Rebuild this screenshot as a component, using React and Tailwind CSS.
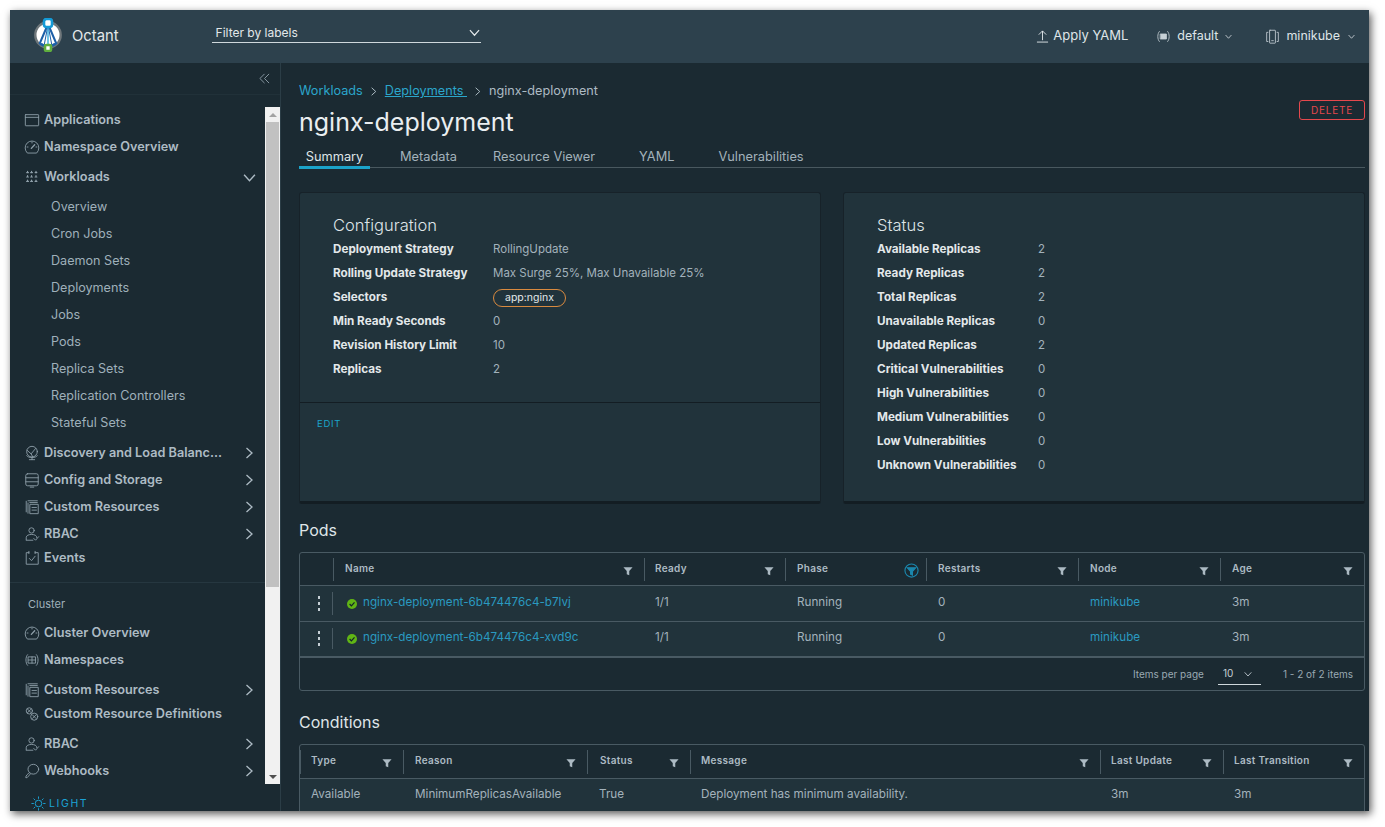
import React from "react";

const S = ({ children, className = "w-4 h-4", vb = "0 0 36 36", sw = 2 }) => (
  <svg viewBox={vb} className={className} fill="none" stroke="currentColor" strokeWidth={sw} strokeLinecap="round" strokeLinejoin="round">{children}</svg>
);
const Chevron = ({ dir = "right", className = "w-3 h-3" }) => (
  <svg viewBox="0 0 12 12" className={className} fill="none" stroke="currentColor" strokeWidth="1.3">
    {dir === "right" ? <path d="M3.5 1 L9 6 L3.5 11" /> : <path d="M1 3.5 L6 9 L11 3.5" />}
  </svg>
);
const Logo = () => (
  <svg viewBox="0 0 30 34" className="w-[30px] h-[34px]">
    <circle cx="15" cy="17" r="12.7" fill="#fff" stroke="#6f777b" strokeWidth="2.4" />
    <path d="M5.5 25.5 A13 13 0 0 0 24.5 25.5 L21 25 A9 9 0 0 1 9 25Z" fill="#1d5fa8" />
    <path d="M15 6 L6.5 26 M15 6 L23.5 26" stroke="#1d5fa8" strokeWidth="2" fill="none" />
    <path d="M15 7 L11 28 M15 7 L19 28" stroke="#1d5fa8" strokeWidth="1" fill="none" />
    <path d="M15 6 V29" stroke="#2aa7dc" strokeWidth="1.3" fill="none" />
    <rect x="11" y="1" width="8" height="8" rx="2.5" fill="#fff" stroke="#149ad6" strokeWidth="2.6" />
    <rect x="12" y="27" width="6" height="6" rx="1.5" fill="#fff" stroke="#5fae3e" strokeWidth="2.6" />
  </svg>
);
const icons = {
  app: <S><rect x="3" y="6" width="30" height="25" rx="1" /><path d="M3 12 H33" /></S>,
  gauge: <S><path d="M7 31 A15.5 15.5 0 1 1 29 31 Z" /><path d="M16.5 21 L24 13" strokeWidth="3" /><path d="M18 7 V9 M7 18 H9 M29 18 H27" /></S>,
  grid: <S sw={2.6}><path d="M6 8h4M15 8h4M25 8h4M6 18h4M15 18h4M25 18h4M6 28h4M15 28h4M25 28h4M8 5v1M17 5v1M27 5v1M8 15v1M17 15v1M27 15v1M8 25v1M17 25v1M27 25v1" /></S>,
  globe: <S><circle cx="18" cy="15" r="12" /><path d="M7 12 L16 20 L26 8 M16 20 L20 27 M6 24 C9 30 27 30 30 24 M12 33 H24 M18 29 V33" /></S>,
  db: <S><rect x="4" y="4" width="28" height="27" rx="4" /><path d="M4 13 H32 M4 22 H32 M14 34 H22" /></S>,
  crs: <S><path d="M5 5 V29 M9 4 H30" /><path d="M9 9 V32 M13 8 H30" /><rect x="14" y="12" width="18" height="21" /><path d="M18 19 H28 M18 25 H28" /></S>,
  rbac: <S><circle cx="17" cy="10" r="6" /><path d="M5 31 V26 C5 21 11 19 17 19 C23 19 29 21 29 26 M5 32 H20 M22 28 L26 32 L33 24" /></S>,
  events: <S><path d="M11 6 H5 V32 H32 V6 H25 M11 3 V8 M25 3 V8" /><path d="M12 19 L17 24 L25 14" /></S>,
  ns: <S><path d="M8 6 C3 11 3 25 8 30 M28 6 C33 11 33 25 28 30" /><rect x="10" y="11" width="16" height="14" /><path d="M18 11 V25 M10 18 H26" /></S>,
  crd: <S><circle cx="12" cy="11" r="7" /><circle cx="23" cy="24" r="8" /><path d="M8 7 L16 15 M16 7 L8 15 M19 20 L27 28 M27 20 L19 28" /></S>,
  hook: <S><ellipse cx="21" cy="14" rx="12" ry="11" /><path d="M12 22 C8 25 4 28 4 33 L7 33 L14 25" /></S>,
};

const rows = [
  { t: "Applications", i: "app", c: "mt-px" },
  { t: "Namespace Overview", i: "gauge", c: "mt-[3px]" },
  { t: "Workloads", i: "grid", c: "mt-[6px]", ch: "down" },
  { t: "Overview", sub: 1, c: "mt-[6px]" },
  { t: "Cron Jobs", sub: 1, c: "mt-[3px]" },
  { t: "Daemon Sets", sub: 1, c: "mt-[3px]" },
  { t: "Deployments", sub: 1, c: "mt-[3px]" },
  { t: "Jobs", sub: 1, c: "mt-[3px]" },
  { t: "Pods", sub: 1, c: "mt-[3px]" },
  { t: "Replica Sets", sub: 1, c: "mt-[3px]" },
  { t: "Replication Controllers", sub: 1, c: "mt-[3px]" },
  { t: "Stateful Sets", sub: 1, c: "mt-[3px]" },
  { t: "Discovery and Load Balanc...", i: "globe", c: "mt-[6px]", ch: "right" },
  { t: "Config and Storage", i: "db", c: "mt-[3px]", ch: "right" },
  { t: "Custom Resources", i: "crs", c: "mt-[3px]", ch: "right" },
  { t: "RBAC", i: "rbac", c: "mt-[3px]", ch: "right" },
  { t: "Events", i: "events", c: "" },
];
const rows2 = [
  { t: "Cluster Overview", i: "gauge", c: "mt-[5px]" },
  { t: "Namespaces", i: "ns", c: "mt-[3px]" },
  { t: "Custom Resources", i: "crs", c: "mt-[6px]", ch: "right" },
  { t: "Custom Resource Definitions", i: "crd", c: "" },
  { t: "RBAC", i: "rbac", c: "mt-[6px]", ch: "right" },
  { t: "Webhooks", i: "hook", c: "mt-[3px]", ch: "right" },
];

const NavRow = ({ r }) => (
  <div className={`h-6 flex items-center relative ${r.c}`}>
    {r.sub ? (
      <span className="pl-[41px] text-[12.6px] text-[#9fb0ba]">{r.t}</span>
    ) : (
      <>
        <span className="ml-[14px] w-[16px] h-4 text-[#8fa0aa] flex items-center">{icons[r.i]}</span>
        <span className="ml-[4px] text-[12.7px] font-semibold text-[#adbbc4] whitespace-nowrap">{r.t}</span>
      </>
    )}
    {r.ch && (
      <span className="absolute left-[233px] text-[#adbbc4]"><Chevron dir={r.ch} className={r.ch === "down" ? "w-[13px] h-[13px]" : "w-3 h-3"} /></span>
    )}
  </div>
);

const Filter = ({ active }) => active ? (
  <svg viewBox="0 0 16 16" className="w-[15px] h-[15px]" fill="none" stroke="#1b87ad" strokeWidth="1.2">
    <circle cx="8" cy="8" r="7" /><path d="M3.5 5 H12.5 L9 9 V13 L7 12 V9 Z" fill="#1b87ad" />
  </svg>
) : (
  <svg viewBox="0 0 12 12" className="w-[10px] h-[10px]"><path d="M0.5 1.5 H11.5 L7.5 6 V11 L4.5 10 V6 Z" fill="#acbac3" /></svg>
);

const TH = ({ w, label, active, pad = "pl-[12px]", first }) => (
  <div className={`${w} h-full flex items-center relative shrink-0`}>
    {!first && <div className={`absolute left-0 top-[5px] bottom-[4px] w-px bg-[#495a63]`} />}
    {label && <span className={`${pad} text-[10px] font-semibold tracking-[0.3px] text-[#adbbc4] -mt-[2px]`}>{label}</span>}
    {!first && (active
      ? <span className="absolute right-[7px] top-[10px]"><Filter active /></span>
      : <span className="absolute right-[11px] top-[13px]"><Filter /></span>)}
  </div>
);

const Card = ({ title, rows, w, edit, valueX }) => (
  <div className={`${w} h-[312px] bg-[#21333b] rounded-[3px] border border-[#172229] border-b-[3px] border-b-[#131d23] flex flex-col`}>
    <div className={`pl-[33px] pt-[21px] ${edit ? "h-[210px] border-b border-[#131d23]" : ""}`}>
      <div className="text-[16.5px] leading-[22px] text-[#dfe5e8] font-light mb-[2px]">{title}</div>
      {rows.map(([k, v, pill]) => (
        <div key={k} className="flex items-center h-6">
          <span className={`${valueX} text-[11.7px] font-bold text-[#e3e8ea] shrink-0`}>{k}</span>
          {pill ? (
            <span className="h-[18px] px-[11px] rounded-full border border-[#d98a3f] flex items-center text-[10.5px] text-[#e3e8ea]">{v}</span>
          ) : (
            <span className="text-[11.5px] text-[#a3b2bb]">{v}</span>
          )}
        </div>
      ))}
    </div>
    {edit && <div className="pl-[17px] pt-[14px] text-[9.5px] tracking-[0.7px] text-[#1ba3c9]">EDIT</div>}
  </div>
);

const podCols = ["w-[33px]", "w-[311px]", "w-[141px]", "w-[141px]", "w-[152px]", "w-[142px]", "flex-1"];
const Pod = ({ name, h }) => (
  <div className={`${h} flex bg-[#21333b] items-center text-[11.7px] text-[#a3b2bb] border-t border-[#495a63]`}>
    <div className="w-[33px] shrink-0 h-full flex items-center relative">
      <span className="absolute right-0 top-[6px] bottom-[5px] w-px bg-[#495a63]" />
      <span className="ml-[18px] flex flex-col gap-[3px]"><i className="w-[2px] h-[3px] bg-[#c5cfd5]" /><i className="w-[2px] h-[3px] bg-[#c5cfd5]" /><i className="w-[2px] h-[3px] bg-[#c5cfd5]" /></span>
    </div>
    <div className="w-[311px] shrink-0 flex items-center pl-[14px] gap-[6px]">
      <svg viewBox="0 0 10 10" className="w-[10px] h-[10px] mt-[2px]"><circle cx="5" cy="5" r="5" fill="#60b515" /><path d="M2.6 5 L4.4 6.8 L7.5 3.4" stroke="#13222a" strokeWidth="1.2" fill="none" /></svg>
      <span className="text-[#2a9ac0]">{name}</span>
    </div>
    <div className={`${podCols[2]} shrink-0 pl-[11px]`}>1/1</div>
    <div className={`${podCols[3]} shrink-0 pl-[12px]`}>Running</div>
    <div className={`${podCols[4]} shrink-0 pl-[12px]`}>0</div>
    <div className={`${podCols[5]} shrink-0 pl-[12px] text-[#2a9ac0]`}>minikube</div>
    <div className="flex-1 pl-[12px]">3m</div>
  </div>
);

export default function App() {
  return (
    <div className="w-[1385px] h-[827px] bg-white p-[10px] overflow-hidden" style={{ fontFamily: 'Inter, "Noto Sans", sans-serif' }}>
      <div className="w-[1359px] h-[801px] flex flex-col bg-[#1b2a32] shadow-[2px_3px_8px_rgba(0,0,0,0.65)] overflow-hidden">
        <header className="h-[53px] shrink-0 bg-[#2d414d] flex items-center text-[#e3e8ea] relative">
          <div className="ml-[23px] -mt-[3px]"><Logo /></div>
          <span className="ml-[9px] text-[14.8px]">Octant</span>
          <div className="ml-[93px] -mt-[7px] w-[269px] h-[20px] border-b border-[#cfd8dc] flex items-center justify-between pl-[4px] pr-[1px] text-[12px]">
            <span className="mt-px">Filter by labels</span><Chevron dir="down" className="w-[11px] h-[11px]" />
          </div>
          <div className="ml-auto flex items-center text-[#dfe5e8] text-[12.5px] -mt-px">
            <svg viewBox="0 0 14 14" className="w-[13px] h-[13px]" fill="none" stroke="currentColor" strokeWidth="1"><path d="M7 11 V1 M3 5 L7 1 L11 5 M1 13 H13" /></svg>
            <span className="ml-[4px] text-[13px]">Apply YAML</span>
            <span className="ml-[28px] text-[#c6d0d6]"><S className="w-[15px] h-[15px]"><path d="M8 6 C3 11 3 25 8 30 M28 6 C33 11 33 25 28 30" /><rect x="11" y="12" width="14" height="12" fill="currentColor" /></S></span>
            <span className="ml-[6px]">default</span>
            <Chevron dir="down" className="w-[7px] h-[7px] ml-[7px]" />
            <span className="ml-[33px] text-[#c6d0d6]"><S className="w-[15px] h-[15px]"><path d="M7 8 H4 V30 H7 M29 8 H32 V30 H29" /><rect x="11" y="3" width="14" height="31" rx="1" /><path d="M16 28 H20" /></S></span>
            <span className="ml-[6px]">minikube</span>
            <Chevron dir="down" className="w-[7px] h-[7px] ml-[8px] mr-[14px]" />
          </div>
        </header>
        <div className="flex-1 flex min-h-0">
          <aside className="w-[271px] shrink-0 border-r border-[#2b3d46] flex flex-col">
            <div className="h-[32px] shrink-0 border-b border-[#213139] flex items-center justify-end pr-[10px] text-[#8fa0aa]">
              <svg viewBox="0 0 12 12" className="w-[11px] h-[11px]" fill="none" stroke="currentColor" strokeWidth="1"><path d="M6 1 L1 6 L6 11 M11 1 L6 6 L11 11" /></svg>
            </div>
            <div className="h-[677px] mt-[12px] shrink-0 flex">
              <div className="w-[255px] shrink-0">
                {rows.map((r) => <NavRow key={r.t} r={r} />)}
                <div className="mt-[12px] border-t border-[#263740] h-[10px]" />
                <div className="h-6 pl-[18px] flex items-center text-[11px] text-[#9fb0ba]">Cluster</div>
                {rows2.map((r) => <NavRow key={r.t + r.i + r.c} r={r} />)}
              </div>
              <div className="w-[15px] shrink-0 bg-[#f1f1f1] flex flex-col items-center">
                <div className="h-[15px] flex items-center"><span className="w-0 h-0 border-x-[4px] border-x-transparent border-b-[4px] border-b-[#a3a3a3]" /></div>
                <div className="w-[13px] h-[465px] bg-[#c1c1c1]" />
                <div className="flex-1" />
                <div className="h-[15px] flex items-center"><span className="w-0 h-0 border-x-[4px] border-x-transparent border-t-[4px] border-t-[#505050]" /></div>
              </div>
            </div>
            <div className="pl-[21px] pt-[12px] flex items-center text-[#1ba3d6] text-[10.5px] tracking-[1.6px]">
              <svg viewBox="0 0 16 16" className="w-[15px] h-[15px]" fill="none" stroke="currentColor" strokeWidth="1"><circle cx="8" cy="8" r="3.5" /><path d="M8 0.5v2.5M8 13v2.5M0.5 8h2.5M13 8h2.5M2.7 2.7l1.8 1.8M11.5 11.5l1.8 1.8M2.7 13.3l1.8-1.8M11.5 4.5l1.8-1.8" /></svg>
              <span className="ml-[3px]">LIGHT</span>
            </div>
          </aside>
          <main className="flex-1 min-w-0 pl-[18px] pr-[4px] overflow-hidden">
            <div className="h-[20px] mt-[18px] flex items-center text-[12.7px]">
              <span className="text-[#2ba6cb]">Workloads</span>
              <span className="mx-[6.5px] text-[#adbbc4]"><Chevron className="w-[9px] h-[9px]" /></span>
              <span className="text-[#2ba6cb] underline whitespace-pre">Deployments </span>
              <span className="mx-[6.5px] text-[#adbbc4]"><Chevron className="w-[9px] h-[9px]" /></span>
              <span className="text-[#adbbc4]">nginx-deployment</span>
            </div>
            <div className="flex justify-between items-start h-[38px]">
              <h1 className="text-[25px] leading-[36px] mt-[3px] text-[#eaeef0] font-normal">nginx-deployment</h1>
              <button className="w-[66px] h-[20px] mt-[-1px] rounded-[3px] border border-[#e5484d] text-[#e5484d] text-[10px] tracking-[0.8px]">DELETE</button>
            </div>
            <div className="h-[18px] mt-[10px] box-content flex text-[12.8px] text-[#a3b2bb] border-b border-[#49585f] relative">
              <span className="w-[71px] text-center text-[#dfe5e8] border-b-[3px] border-[#1ba3c9] h-[20px] leading-[16px]">Summary</span>
              <span className="ml-[30px] leading-[16px]">Metadata</span>
              <span className="ml-[36px] leading-[16px]">Resource Viewer</span>
              <span className="ml-[44px] leading-[16px]">YAML</span>
              <span className="ml-[44px] leading-[16px]">Vulnerabilities</span>
            </div>
            <div className="flex gap-[22px] mt-[24px]">
              <Card w="w-[522px]" valueX="w-[160px]" edit title="Configuration" rows={[
                ["Deployment Strategy", "RollingUpdate"],
                ["Rolling Update Strategy", "Max Surge 25%, Max Unavailable 25%"],
                ["Selectors", "app:nginx", true],
                ["Min Ready Seconds", "0"],
                ["Revision History Limit", "10"],
                ["Replicas", "2"],
              ]} />
              <Card w="w-[522px]" valueX="w-[161px]" title="Status" rows={[
                ["Available Replicas", "2"], ["Ready Replicas", "2"], ["Total Replicas", "2"], ["Unavailable Replicas", "0"], ["Updated Replicas", "2"],
                ["Critical Vulnerabilities", "0"], ["High Vulnerabilities", "0"], ["Medium Vulnerabilities", "0"], ["Low Vulnerabilities", "0"], ["Unknown Vulnerabilities", "0"],
              ]} />
            </div>
            <h2 className="text-[16px] leading-[22px] mt-[15px] text-[#dfe5e8]">Pods</h2>
            <div className="mt-[11px] h-[139px] border border-[#495a63] rounded-[3px] flex flex-col">
              <div className="h-[32px] flex shrink-0">
                <TH w={podCols[0]} first />
                <TH w={podCols[1]} label="Name" />
                <TH w={podCols[2]} label="Ready" pad="pl-[11px]" />
                <TH w={podCols[3]} label="Phase" active />
                <TH w={podCols[4]} label="Restarts" />
                <TH w={podCols[5]} label="Node" />
                <TH w={podCols[6]} label="Age" />
              </div>
              <Pod name="nginx-deployment-6b474476c4-b7lvj" h="h-[36px] pb-[1px]" />
              <Pod name="nginx-deployment-6b474476c4-xvd9c" h="h-[35px] pb-[2px]" />
              <div className="flex-1 border-t-2 border-[#495a63] flex items-center justify-end pr-[11px] text-[10px] text-[#9aa9b2]">
                <span>Items per page</span>
                <span className="ml-[14px] w-[43px] h-[22px] border-b border-[#cfd8dc] flex items-center justify-between pl-[5px] pr-[9px] text-[#c6d0d6]">10<Chevron dir="down" className="w-[8px] h-[8px]" /></span>
                <span className="ml-[22px]">1 - 2 of 2 items</span>
              </div>
            </div>
            <h2 className="text-[16px] leading-[22px] mt-[20px] text-[#dfe5e8]">Conditions</h2>
            <div className="mt-[11px] border border-[#495a63] rounded-t-[3px]">
              <div className="h-[33px] flex">
                <TH w="w-[103px]" label="Type" pad="pl-[11px]" />
                <TH w="w-[184px]" label="Reason" pad="pl-[12px]" />
                <TH w="w-[103px]" label="Status" pad="pl-[13px]" />
                <TH w="w-[410px]" label="Message" pad="pl-[11px]" />
                <TH w="w-[123px]" label="Last Update" pad="pl-[11px]" />
                <TH w="flex-1" label="Last Transition" pad="pl-[11px]" />
              </div>
              <div className="h-[33px] flex items-center bg-[#21333b] border-t border-[#495a63] text-[11.7px] text-[#a3b2bb]">
                <span className="w-[103px] pl-[11px] shrink-0">Available</span>
                <span className="w-[184px] pl-[12px] shrink-0">MinimumReplicasAvailable</span>
                <span className="w-[103px] pl-[12px] shrink-0">True</span>
                <span className="w-[410px] pl-[11px] shrink-0">Deployment has minimum availability.</span>
                <span className="w-[123px] pl-[11px] shrink-0">3m</span>
                <span className="pl-[11px]">3m</span>
              </div>
            </div>
          </main>
        </div>
      </div>
    </div>
  );
}
